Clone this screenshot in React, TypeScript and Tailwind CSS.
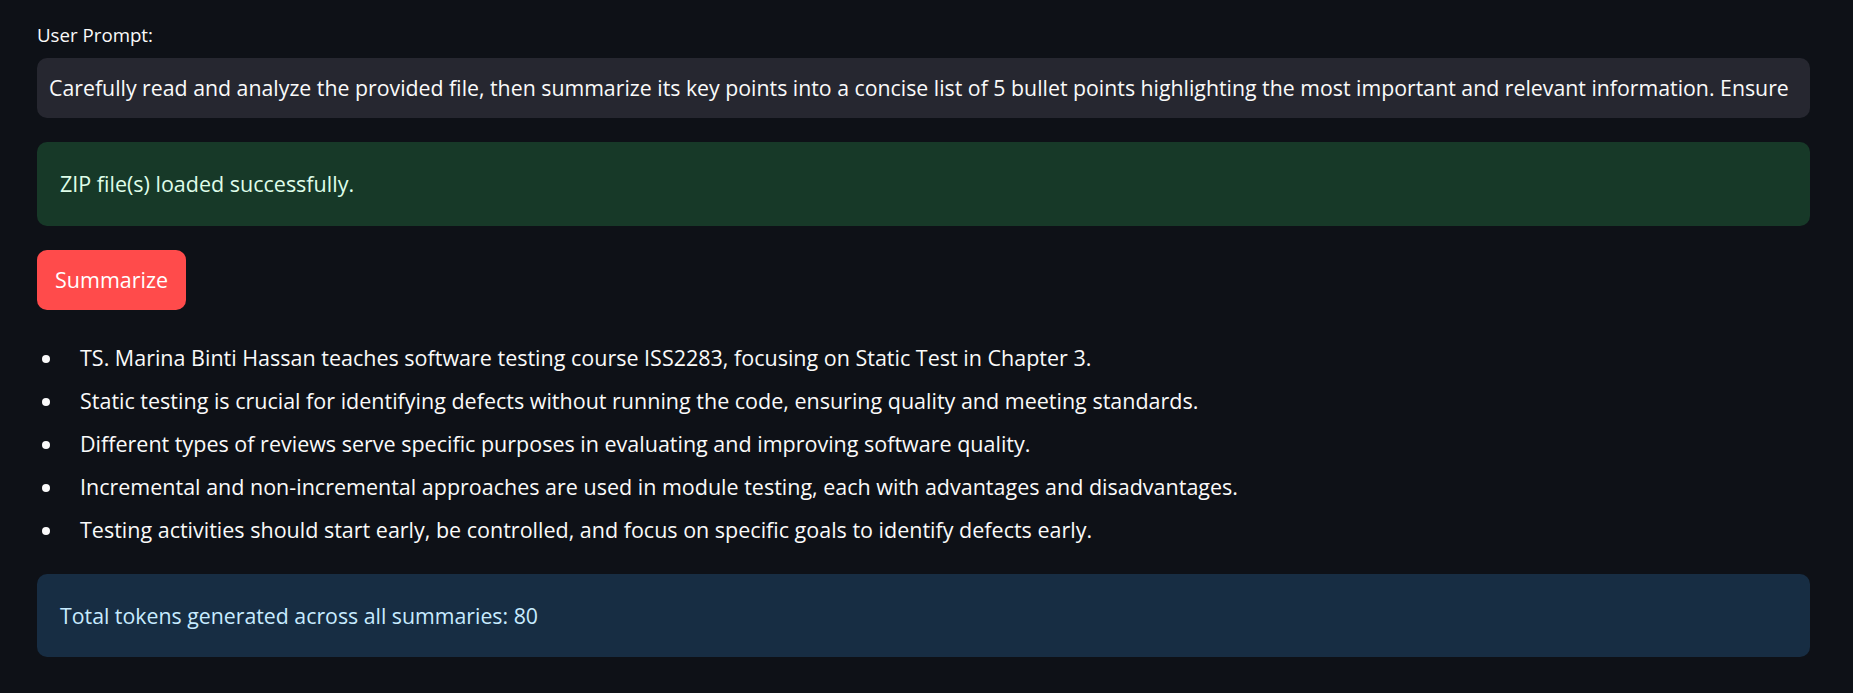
export default function App() {
  const bullets = [
    "TS. Marina Binti Hassan teaches software testing course ISS2283, focusing on Static Test in Chapter 3.",
    "Static testing is crucial for identifying defects without running the code, ensuring quality and meeting standards.",
    "Different types of reviews serve specific purposes in evaluating and improving software quality.",
    "Incremental and non-incremental approaches are used in module testing, each with advantages and disadvantages.",
    "Testing activities should start early, be controlled, and focus on specific goals to identify defects early.",
  ];

  return (
    <div
      className="min-h-screen w-full bg-[#0e1117] text-[#fafafa]"
      style={{ fontFamily: "'Open Sans', 'Noto Sans', sans-serif" }}
    >
      <div className="pl-[37px] pr-[43px] pt-[23px] pb-[36px]">
        <div className="h-[24px] text-[18.7px] leading-[24px]">User Prompt:</div>

        <div className="mt-[11px] flex h-[60px] items-center overflow-hidden whitespace-nowrap rounded-[10px] bg-[#262730] pl-[12px] pr-[4px] text-[21.3px]">
          Carefully read and analyze the provided file, then summarize its key points into a concise list of 5 bullet points highlighting the most important and relevant information. Ensure
        </div>

        <div className="mt-[24px] flex h-[84px] items-center rounded-[10px] bg-[#173928] px-[23px] text-[21.5px] text-[#dffde9]">
          ZIP file(s) loaded successfully.
        </div>

        <button className="mt-[24px] flex h-[60px] items-center rounded-[10px] bg-[#ff4b4b] px-[18px] text-[21.5px] text-white">
          Summarize
        </button>

        <ul className="mt-[27px]">
          {bullets.map((b) => (
            <li key={b} className="flex h-[43px] items-center text-[21.5px]">
              <span className="flex w-[43px] shrink-0 items-center">
                <span className="ml-[5px] h-[8px] w-[8px] rounded-full bg-[#fafafa]" />
              </span>
              {b}
            </li>
          ))}
        </ul>

        <div className="mt-[22px] flex h-[83px] items-center rounded-[10px] bg-[#172d43] px-[23px] text-[21.3px] text-[#c7ebff]">
          Total tokens generated across all summaries: 80
        </div>
      </div>
    </div>
  );
}
